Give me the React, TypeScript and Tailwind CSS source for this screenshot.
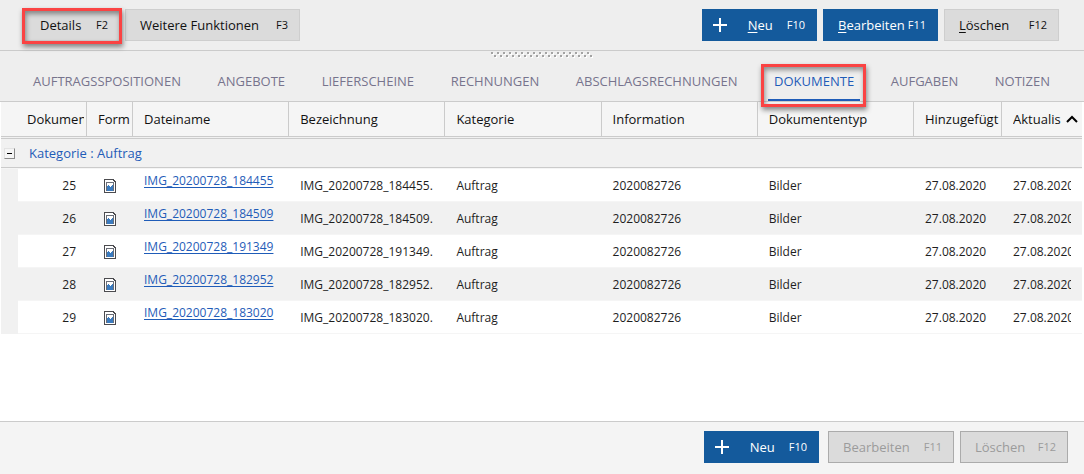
import React, { useState } from 'react';

interface DocumentRow {
  id: number;
  fileName: string;
  category: string;
  information: string;
  type: string;
  addedAt: string;
  updatedAt: string;
}

const TABS = [
  'AUFTRAGSSPOSITIONEN',
  'ANGEBOTE',
  'LIEFERSCHEINE',
  'RECHNUNGEN',
  'ABSCHLAGSRECHNUNGEN',
  'DOKUMENTE',
  'AUFGABEN',
  'NOTIZEN',
];

const FILES = [
  'IMG_20200728_184455',
  'IMG_20200728_184509',
  'IMG_20200728_191349',
  'IMG_20200728_182952',
  'IMG_20200728_183020',
];

const ROWS: DocumentRow[] = FILES.map((fileName, i) => ({
  id: 25 + i,
  fileName,
  category: 'Auftrag',
  information: '2020082726',
  type: 'Bilder',
  addedAt: '27.08.2020',
  updatedAt: '27.08.2020',
}));

const HEADERS = ['Form', 'Dateiname', 'Bezeichnung', 'Kategorie', 'Information', 'Dokumententyp', 'Hinzugefügt'];

const PlusIcon = () => (
  <svg width="14" height="14" viewBox="0 0 14 14" className="shrink-0" aria-hidden="true">
    <path d="M6 0h2v6h6v2H8v6H6V8H0V6h6z" fill="#fff" />
  </svg>
);

const ImageFileIcon = () => (
  <svg width="12" height="14" viewBox="0 0 12 14" shapeRendering="crispEdges" className="block" aria-hidden="true">
    <path d="M0 0h10v1h1v1h1v12H0z" fill="#4b4b4f" />
    <path d="M1 1h8v1h1v1h1v10H1z" fill="#fff" />
    <path d="M2 3h8v9H2z" fill="#6a6e78" />
    <path d="M3 4h6v7H3z" fill="#fff" />
    <path d="M3 7h1V6h1v1h1v1h1V7h1V6h1v6H3z" fill="#3b7bbf" />
  </svg>
);

const SplitterGrip = () => (
  <svg width="103" height="6" viewBox="0 0 103 6" shapeRendering="crispEdges" className="block" aria-hidden="true">
    {Array.from({ length: 34 }, (_, i) => (
      <g key={i}>
        <rect x={i * 3 + 1} y={i % 2 ? 4 : 1} width="2" height="2" fill="#fff" />
        <rect x={i * 3} y={i % 2 ? 3 : 0} width="2" height="2" fill="#a3a3a3" />
      </g>
    ))}
  </svg>
);

const Highlight = ({ className }: { className: string }) => (
  <span
    className={`pointer-events-none absolute z-10 border-3 border-[#fa4343] shadow-[1px_3px_5px_rgba(0,0,0,0.45),inset_1px_3px_5px_rgba(0,0,0,0.4)] ${className}`}
  />
);

interface ActionButtonProps {
  label: string;
  shortcut: string;
  className: string;
  primary?: boolean;
  plus?: boolean;
  accessKey?: boolean;
  disabled?: boolean;
}

const ActionButton: React.FC<ActionButtonProps> = ({ label, shortcut, className, primary, plus, accessKey, disabled }) => {
  const tone = primary
    ? 'border-[#145a9c] bg-[#145a9c] text-white'
    : disabled
      ? 'border-[#ababab] bg-[#dbdbdb] text-[#9b9b9b]'
      : 'border-[#cecece] bg-[#dbdbdb] text-[#111111]';

  return (
    <button
      type="button"
      disabled={disabled}
      className={`flex h-8 items-center justify-between border whitespace-nowrap ${tone} ${className}`}
    >
      {plus && <PlusIcon />}
      <span className={`font-medium ${plus ? 'mr-3.5 ml-auto' : ''}`}>
        {accessKey ? (
          <>
            <span className="underline underline-offset-2">{label[0]}</span>
            {label.slice(1)}
          </>
        ) : (
          label
        )}
      </span>
      <span className="text-[11px]">{shortcut}</span>
    </button>
  );
};

export default function App() {
  const [activeTab, setActiveTab] = useState('DOKUMENTE');
  const [expanded, setExpanded] = useState(true);

  return (
    <div className="flex min-h-screen flex-col bg-[#eeeeee] font-['Open_Sans',sans-serif] text-[13px] leading-5 text-[#1e1e1e]">
      <header className="flex items-center justify-between border-b border-[#cbcbcb] pt-[9px] pr-[25px] pb-[9px] pl-6">
        <div className="flex gap-1">
          <div className="relative">
            <ActionButton label="Details" shortcut="F2" className="w-[97px] pr-3 pl-[15px]" />
            <Highlight className="-top-px -right-px -bottom-[3px] -left-0.5" />
          </div>
          <ActionButton label="Weitere Funktionen" shortcut="F3" className="w-[175px] pr-[11px] pl-3.5" />
        </div>
        <div className="flex gap-1.5">
          <ActionButton label="Neu" shortcut="F10" primary plus accessKey className="w-[115px] pr-[11px] pl-2.5" />
          <ActionButton label="Bearbeiten" shortcut="F11" primary accessKey className="w-[115px] pr-[11px] pl-3.5" />
          <ActionButton label="Löschen" shortcut="F12" accessKey className="w-[115px] pr-[11px] pl-3.5" />
        </div>
      </header>

      <div className="flex justify-center pt-px">
        <SplitterGrip />
      </div>

      <nav className="flex h-11 items-end justify-between border-b border-[#cbcbcb] pr-7 pl-[27px]">
        {TABS.map((tab) => (
          <div key={tab} className="relative">
            <button
              type="button"
              onClick={() => setActiveTab(tab)}
              className={`block border-b-2 px-1.5 pb-2 ${
                tab === activeTab ? 'border-[#1f5cb8] text-[#1f5cb8]' : 'border-transparent text-[#77748d]'
              }`}
            >
              {tab}
            </button>
            {tab === 'DOKUMENTE' && <Highlight className="-top-[7px] -right-1.5 -bottom-1.5 -left-[7px]" />}
          </div>
        ))}
      </nav>

      <main className="flex-1 border-b border-[#cbcbcb] bg-white pr-0.5 pl-px">
        <table className="w-full table-fixed border-separate border-spacing-0 text-left">
          <colgroup>
            <col className="w-[17px]" />
            <col className="w-[69px]" />
            <col className="w-[46px]" />
            <col />
            <col />
            <col />
            <col />
            <col />
            <col className="w-[88px]" />
            <col className="w-20" />
          </colgroup>
          <thead className="bg-[#f5f5f5] text-[#111111]">
            <tr className="h-[35px]">
              <th colSpan={2} className="border-r border-b border-[#cbcbcb] p-0 pr-0.5 pl-[26px] font-medium">
                <div className="overflow-hidden whitespace-nowrap">Dokumen</div>
              </th>
              {HEADERS.map((header) => (
                <th key={header} className="border-r border-b border-[#cbcbcb] p-0 pl-[11px] font-medium">
                  <div className="overflow-hidden whitespace-nowrap">{header}</div>
                </th>
              ))}
              <th className="border-b border-[#cbcbcb] p-0 pr-1 pl-[11px] font-medium">
                <div className="flex items-center justify-between">
                  <span className="overflow-hidden whitespace-nowrap">Aktualis</span>
                  <svg width="12" height="8" viewBox="0 0 12 8" className="shrink-0" aria-hidden="true">
                    <path d="M1 7L6 2l5 5" fill="none" stroke="#000" strokeWidth="2" />
                  </svg>
                </div>
              </th>
            </tr>
          </thead>
          <tbody>
            <tr className="h-8 bg-[#f1f1f1]">
              <td colSpan={10} className="border-b border-[#f5f5f5] p-0">
                <div className="mt-px flex h-[30px] items-center gap-3.5 border-y border-[#cbcbcb] pl-[3px] text-[#1f5cb8]">
                  <button
                    type="button"
                    aria-label="Gruppe ein- oder ausklappen"
                    onClick={() => setExpanded(!expanded)}
                    className="flex size-[11px] items-center justify-center border border-t-[#e3e3e3] border-r-[#8a8a8a] border-b-[#8a8a8a] border-l-[#e3e3e3] bg-[#f5f5f5]"
                  >
                    <span className="h-px w-[5px] bg-black" />
                  </button>
                  <span>Kategorie : Auftrag</span>
                </div>
              </td>
            </tr>
            {expanded &&
              ROWS.map((row) => (
                <tr key={row.id} className="h-[33px] text-[12px] whitespace-nowrap odd:bg-[#f1f1f1] even:bg-white">
                  <td className="bg-[#f1f1f1] p-0" />
                  <td className="border-b border-[#f5f5f5] p-0 pt-0.5 pr-[11px] text-right">{row.id}</td>
                  <td className="border-b border-[#f5f5f5] p-0 pt-0.5 pl-[17px]">
                    <ImageFileIcon />
                  </td>
                  <td className="border-b border-[#f5f5f5] p-0 pb-2 pl-[11px]">
                    <a href="#" className="text-[#1f5cb8] underline underline-offset-2">
                      {row.fileName}
                    </a>
                  </td>
                  <td className="border-b border-[#f5f5f5] p-0 pt-0.5 pl-[11px]">{row.fileName}.</td>
                  <td className="border-b border-[#f5f5f5] p-0 pt-0.5 pl-[11px]">{row.category}</td>
                  <td className="border-b border-[#f5f5f5] p-0 pt-0.5 pl-[11px]">{row.information}</td>
                  <td className="border-b border-[#f5f5f5] p-0 pt-0.5 pl-[11px]">{row.type}</td>
                  <td className="border-b border-[#f5f5f5] p-0 pt-0.5 pl-[11px]">{row.addedAt}</td>
                  <td className="border-b border-[#f5f5f5] p-0 pt-0.5 pr-[11px] pl-[11px]">
                    <div className="overflow-hidden">{row.updatedAt}</div>
                  </td>
                </tr>
              ))}
          </tbody>
        </table>
      </main>

      <footer className="flex justify-end bg-[#f4f4f4] pt-[9px] pr-4 pb-[11px]">
        <ActionButton label="Neu" shortcut="F10" primary plus className="mr-[9px] w-[115px] pr-[11px] pl-2.5" />
        <ActionButton label="Bearbeiten" shortcut="F11" disabled className="mr-1.5 w-[126px] pr-[11px] pl-3.5" />
        <ActionButton label="Löschen" shortcut="F12" disabled className="w-[108px] pr-[11px] pl-3.5" />
      </footer>
    </div>
  );
}
